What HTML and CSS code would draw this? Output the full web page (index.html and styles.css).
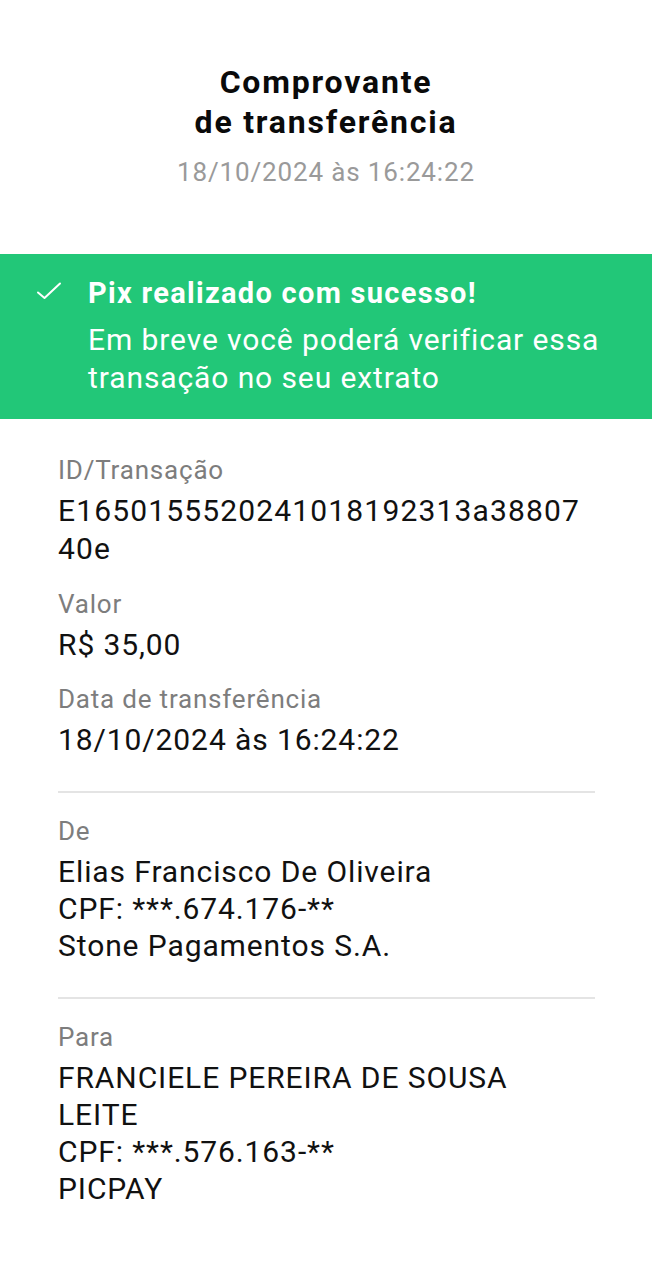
FILE: index.html
```html
<!DOCTYPE html>
<html lang="pt-BR">
<head>
<meta charset="utf-8">
<link rel="stylesheet" href="styles.css">
</head>
<body>
<main class="receipt">
  <header class="head">
    <h1 class="title">Comprovante<br>de transferência</h1>
    <p class="stamp">18/10/2024 às 16:24:22</p>
  </header>
  <section class="banner">
    <svg class="check" width="26" height="20" viewBox="0 0 26 20" aria-hidden="true">
      <path d="M2 10.5 L8.5 16 L24 1.5" fill="none" stroke="#fff" stroke-width="2" stroke-linecap="round" stroke-linejoin="round"/>
    </svg>
    <div class="banner-text">
      <p class="banner-title">Pix realizado com sucesso!</p>
      <p class="banner-msg">Em breve você poderá verificar essa transação no seu extrato</p>
    </div>
  </section>
  <section class="group first">
    <div class="field">
      <p class="label">ID/Transação</p>
      <p class="value id">E1650155520241018192313a3880740e</p>
    </div>
    <div class="field">
      <p class="label">Valor</p>
      <p class="value">R$ 35,00</p>
    </div>
    <div class="field">
      <p class="label">Data de transferência</p>
      <p class="value">18/10/2024 às 16:24:22</p>
    </div>
  </section>
  <hr class="rule">
  <section class="group">
    <div class="field">
      <p class="label">De</p>
      <p class="value">Elias Francisco De Oliveira<br>CPF: ***.674.176-**<br>Stone Pagamentos S.A.</p>
    </div>
  </section>
  <hr class="rule">
  <section class="group">
    <div class="field">
      <p class="label">Para</p>
      <p class="value">FRANCIELE PEREIRA DE SOUSA LEITE<br>CPF: ***.576.163-**<br>PICPAY</p>
    </div>
  </section>
</main>
</body>
</html>
```
FILE: styles.css
```css
* { box-sizing: border-box; }
html, body { margin: 0; padding: 0; background: #fff; }
body { font-family: Roboto, "Noto Sans", "Liberation Sans", sans-serif; color: #111; }
p, h1 { margin: 0; }
.receipt { width: 652px; min-height: 1280px; }
.head { padding-top: 62px; text-align: center; }
.title { font-size: 32px; font-weight: 700; line-height: 40px; letter-spacing: 1.8px; color: #0a0a0a; }
.stamp { margin-top: 15px; font-size: 26px; line-height: 30px; letter-spacing: 0.85px; color: #9a9a9a; }
.banner { margin-top: 67px; background: #22c778; color: #fff; display: flex; align-items: flex-start; gap: 26px; padding: 20px 30px 22px 36px; }
.check { flex: none; margin-top: 8px; }
.banner-title { font-size: 29px; font-weight: 700; line-height: 38px; letter-spacing: 1.3px; }
.banner-msg { margin-top: 9px; font-size: 30px; line-height: 38px; letter-spacing: 0.9px; }
.group { padding: 22px 64px 0 58px; display: flex; flex-direction: column; gap: 20px; }
.group.first { padding-top: 35px; }
.label { font-size: 26px; line-height: 32px; letter-spacing: 0.8px; color: #7d7d7d; }
.value { margin-top: 6px; font-size: 30px; line-height: 37px; letter-spacing: 0.9px; color: #111; }
.value.id { line-height: 38px; letter-spacing: 1.15px; word-break: break-all; }
.rule { border: 0; height: 2px; background: #e4e4e4; margin: 33px 57px 0 58px; }
```
